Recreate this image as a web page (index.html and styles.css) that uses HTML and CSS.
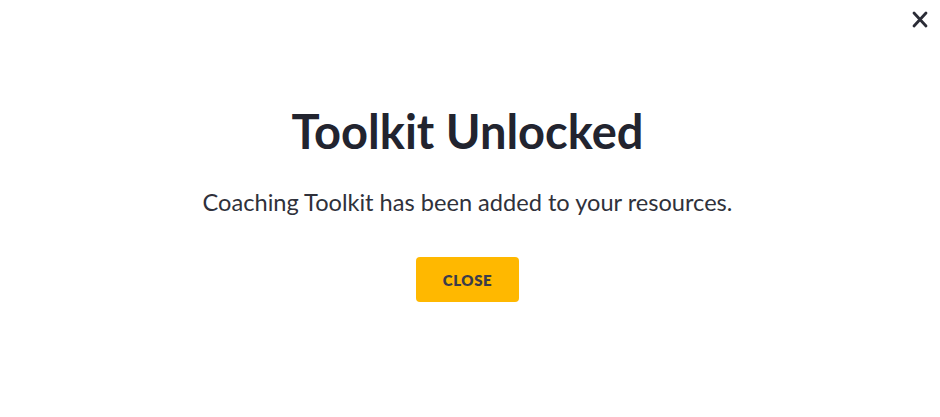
FILE: index.html
```html
<html>
<head>
   <link rel="stylesheet" href="styles.css">
</head>
<body>
	<div class="modal">
		<button class="dismiss" aria-label="Close">
			<svg width="16" height="17" viewBox="0 0 16 17"><path d="M2 2 L14 15 M14 2 L2 15" stroke="#2a2c36" stroke-width="2.8" stroke-linecap="round"/></svg>
		</button>
		<h1 class="title">Toolkit Unlocked</h1>
		<p class="message">Coaching Toolkit has been added to your resources.</p>
		<button class="button">CLOSE</button>
	</div>
</body>
</html>
```
FILE: styles.css
```css
body{
	margin: 0;
	background-color: #fff;
	font-family: "Lato", "Liberation Sans", sans-serif;
}
.modal{
	position: relative;
	width: 940px;
	height: 417px;
	display: flex;
	flex-direction: column;
	align-items: center;
	padding-top: 103px;
	padding-right: 5px;
	box-sizing: border-box;
}
.dismiss{
	position: absolute;
	top: 11px;
	right: 12px;
	border: none;
	background: none;
	padding: 0;
	width: 16px;
	height: 17px;
}
.dismiss svg{
	display: block;
}
.title{
	margin: 0;
	font-size: 47px;
	font-weight: 700;
	color: #22242f;
	line-height: 56px;
}
.message{
	margin: 29px 0 0 0;
	font-size: 23.6px;
	color: #2f313b;
	line-height: 28px;
}
.button{
	margin-top: 41px;
	width: 103px;
	height: 45px;
	border: none;
	border-radius: 4px;
	background-color: #ffb800;
	color: #3b3c4a;
	font-family: "Lato", "Liberation Sans", sans-serif;
	font-weight: 800;
	font-size: 15px;
	letter-spacing: 0.6px;
}
```
